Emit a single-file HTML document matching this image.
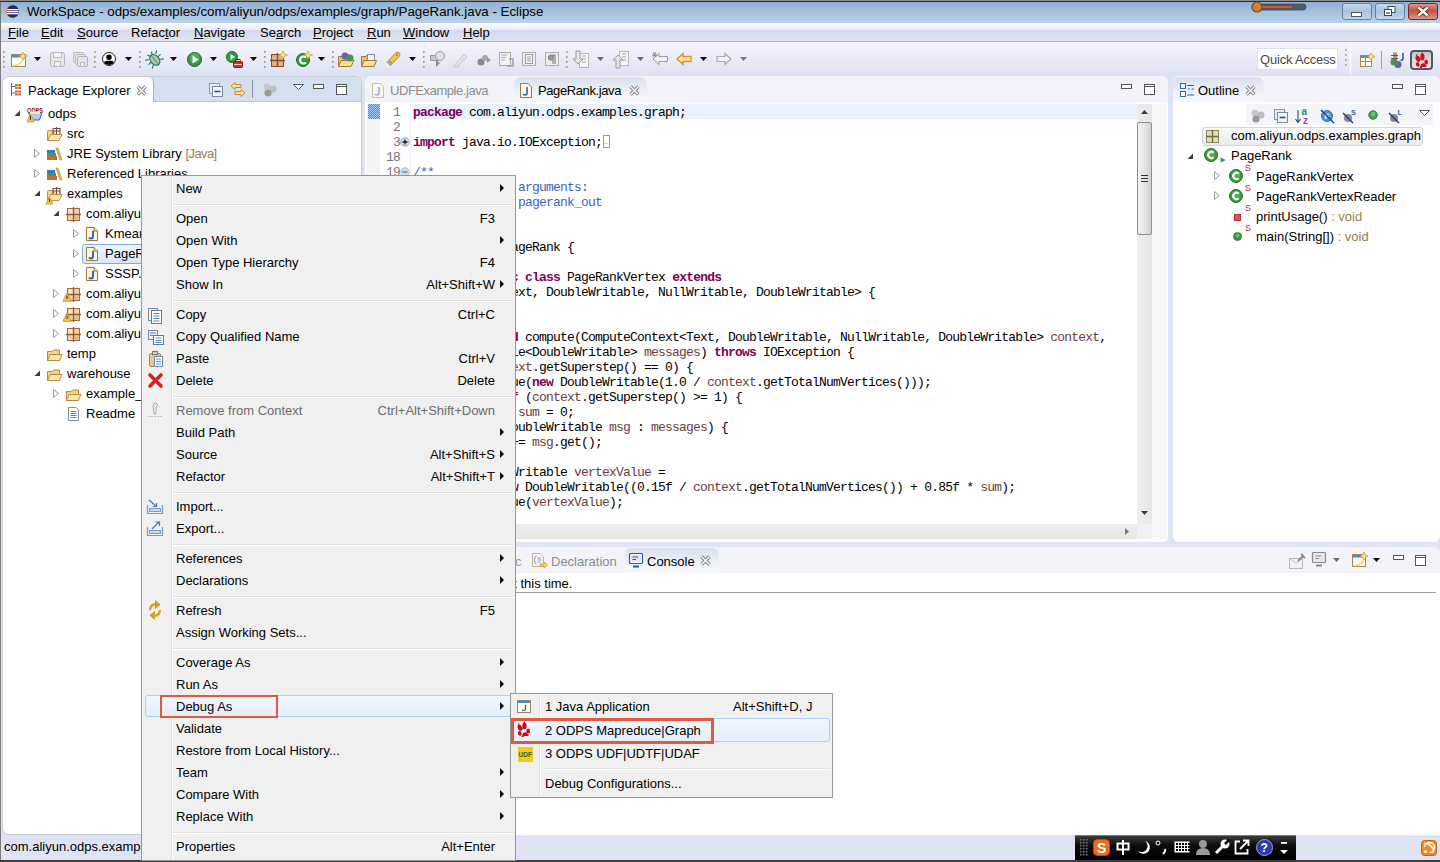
<!DOCTYPE html><html><head><meta charset="utf-8"><style>
*{margin:0;padding:0;box-sizing:border-box}
html,body{width:1440px;height:862px;overflow:hidden;background:#dfe4f4;font-family:"Liberation Sans",sans-serif;font-size:13px;color:#000}
.a{position:absolute}
.t{position:absolute;white-space:nowrap;line-height:16px}
.code{position:absolute;font-family:"Liberation Mono",monospace;font-size:13px;letter-spacing:-0.8px;white-space:pre;line-height:15px;color:#000}
.kw{color:#7f0055;font-weight:bold}
.fld{color:#6a3e3e}
.cm{color:#3f5fbf}
.ln{position:absolute;font-family:"Liberation Mono",monospace;font-size:13px;letter-spacing:-0.8px;white-space:pre;line-height:15px;color:#787878;text-align:right;width:30px}
.menu{position:absolute;background:#f0f0f0;border:1px solid #979797}
.sep{position:absolute;height:2px;border-top:1px solid #e0e0e0;border-bottom:1px solid #fff}
.arr{position:absolute;width:0;height:0;border-top:4px solid transparent;border-bottom:4px solid transparent;border-left:4px solid #000}
u{text-decoration:underline;text-underline-offset:1px}
svg{position:absolute;overflow:visible}
</style></head><body>
<div class="a" style="left:0;top:0;width:1440px;height:1px;background:#8a8a8a"></div><div class="a" style="left:0;top:1px;width:1440px;height:1px;background:#2e2e2e"></div>
<div class="a" style="left:0;top:2px;width:1440px;height:21px;background:linear-gradient(#93b0d2,#b9d3eb)"></div>
<div class="t" style="left:27px;top:4px;font-size:13.3px;color:#000">WorkSpace - odps/examples/com/aliyun/odps/examples/graph/PageRank.java - Eclipse</div>
<svg style="left:4px;top:4px" width="16" height="16" viewBox="0 0 16 16"><circle cx="8" cy="7.5" r="6.5" fill="#f0a030"/><circle cx="8.8" cy="7.5" r="6.2" fill="#2c2660"/><rect x="3" y="5" width="11.5" height="1.3" fill="#fff"/><rect x="2.6" y="7" width="12" height="1.3" fill="#fff"/><rect x="3" y="9" width="11.5" height="1.3" fill="#fff"/></svg>
<svg style="left:1250px;top:1px" width="58" height="12" viewBox="0 0 58 12"><rect x="2" y="3" width="54" height="6" rx="3" fill="#4d5d6e" stroke="#3a4654" stroke-width="0.8"/><rect x="6" y="5" width="36" height="2" fill="#e8501e"/><circle cx="7" cy="6" r="5" fill="#e67a1a" stroke="#4a5560" stroke-width="1.2"/></svg>
<svg style="left:1342px;top:3px" width="30" height="17" viewBox="0 0 30 17"><defs><linearGradient id="g1342" x1="0" y1="0" x2="0" y2="1"><stop offset="0" stop-color="#c7d9ee"/><stop offset="0.5" stop-color="#a9c1dd"/><stop offset="0.5" stop-color="#a9c1dd" stop-opacity="0.85"/><stop offset="1" stop-color="#c7d9ee"/></linearGradient></defs><rect x="0.5" y="0.5" width="29" height="16" rx="2.5" fill="url(#g1342)" stroke="#6a7f9c"/><rect x="9.5" y="9.5" width="10" height="4" fill="#fff" stroke="#3a4a60" stroke-width="0.9"/></svg>
<svg style="left:1375px;top:3px" width="30" height="17" viewBox="0 0 30 17"><defs><linearGradient id="g1375" x1="0" y1="0" x2="0" y2="1"><stop offset="0" stop-color="#c7d9ee"/><stop offset="0.5" stop-color="#a9c1dd"/><stop offset="0.5" stop-color="#a9c1dd" stop-opacity="0.85"/><stop offset="1" stop-color="#c7d9ee"/></linearGradient></defs><rect x="0.5" y="0.5" width="29" height="16" rx="2.5" fill="url(#g1375)" stroke="#6a7f9c"/><rect x="13" y="3.5" width="7" height="6" fill="#fff" stroke="#3a4a60" stroke-width="1"/><rect x="9.5" y="6.5" width="7" height="6" fill="#fff" stroke="#3a4a60" stroke-width="1"/><rect x="11" y="9" width="4" height="2" fill="#7f90a8"/></svg>
<svg style="left:1408px;top:3px" width="30" height="17" viewBox="0 0 30 17"><defs><linearGradient id="g1408" x1="0" y1="0" x2="0" y2="1"><stop offset="0" stop-color="#e49a8a"/><stop offset="0.5" stop-color="#c44a36"/><stop offset="0.5" stop-color="#c44a36" stop-opacity="0.85"/><stop offset="1" stop-color="#e49a8a"/></linearGradient></defs><rect x="0.5" y="0.5" width="29" height="16" rx="2.5" fill="url(#g1408)" stroke="#6e2a22"/><path d="M10.5 4.5 L19.5 12.5 M19.5 4.5 L10.5 12.5" stroke="#3a1a16" stroke-width="4"/><path d="M10.5 4.5 L19.5 12.5 M19.5 4.5 L10.5 12.5" stroke="#fff" stroke-width="2.4"/></svg>
<div class="a" style="left:0;top:23px;width:1440px;height:18px;background:linear-gradient(#ffffff 0px,#f2f3fa 4px,#e6e9f4 7px,#d3d8ec 7px,#dfe4f4 18px)"></div>
<div class="a" style="left:0;top:41px;width:1440px;height:1px;background:#b0b5c6"></div>
<div class="t" style="left:8px;top:25px"><u>F</u>ile</div>
<div class="t" style="left:41px;top:25px"><u>E</u>dit</div>
<div class="t" style="left:77px;top:25px"><u>S</u>ource</div>
<div class="t" style="left:131px;top:25px">Refac<u>t</u>or</div>
<div class="t" style="left:194px;top:25px"><u>N</u>avigate</div>
<div class="t" style="left:260px;top:25px">Se<u>a</u>rch</div>
<div class="t" style="left:313px;top:25px"><u>P</u>roject</div>
<div class="t" style="left:367px;top:25px"><u>R</u>un</div>
<div class="t" style="left:403px;top:25px"><u>W</u>indow</div>
<div class="t" style="left:463px;top:25px"><u>H</u>elp</div>
<div class="a" style="left:0;top:42px;width:1440px;height:34px;background:linear-gradient(#f5f6fd,#dde1f2)"></div>
<svg style="left:3px;top:51px" width="2" height="17" viewBox="0 0 2 17"><rect x="0" y="0" width="1.6" height="1.8" fill="#a8967a"/><rect x="0" y="5" width="1.6" height="1.8" fill="#a8967a"/><rect x="0" y="10" width="1.6" height="1.8" fill="#a8967a"/><rect x="0" y="15" width="1.6" height="1.8" fill="#a8967a"/></svg>
<svg style="left:94px;top:51px" width="2" height="17" viewBox="0 0 2 17"><rect x="0" y="0" width="1.6" height="1.8" fill="#a8967a"/><rect x="0" y="5" width="1.6" height="1.8" fill="#a8967a"/><rect x="0" y="10" width="1.6" height="1.8" fill="#a8967a"/><rect x="0" y="15" width="1.6" height="1.8" fill="#a8967a"/></svg>
<svg style="left:139px;top:51px" width="2" height="17" viewBox="0 0 2 17"><rect x="0" y="0" width="1.6" height="1.8" fill="#a8967a"/><rect x="0" y="5" width="1.6" height="1.8" fill="#a8967a"/><rect x="0" y="10" width="1.6" height="1.8" fill="#a8967a"/><rect x="0" y="15" width="1.6" height="1.8" fill="#a8967a"/></svg>
<svg style="left:264px;top:51px" width="2" height="17" viewBox="0 0 2 17"><rect x="0" y="0" width="1.6" height="1.8" fill="#a8967a"/><rect x="0" y="5" width="1.6" height="1.8" fill="#a8967a"/><rect x="0" y="10" width="1.6" height="1.8" fill="#a8967a"/><rect x="0" y="15" width="1.6" height="1.8" fill="#a8967a"/></svg>
<svg style="left:332px;top:51px" width="2" height="17" viewBox="0 0 2 17"><rect x="0" y="0" width="1.6" height="1.8" fill="#a8967a"/><rect x="0" y="5" width="1.6" height="1.8" fill="#a8967a"/><rect x="0" y="10" width="1.6" height="1.8" fill="#a8967a"/><rect x="0" y="15" width="1.6" height="1.8" fill="#a8967a"/></svg>
<svg style="left:423px;top:51px" width="2" height="17" viewBox="0 0 2 17"><rect x="0" y="0" width="1.6" height="1.8" fill="#a8967a"/><rect x="0" y="5" width="1.6" height="1.8" fill="#a8967a"/><rect x="0" y="10" width="1.6" height="1.8" fill="#a8967a"/><rect x="0" y="15" width="1.6" height="1.8" fill="#a8967a"/></svg>
<svg style="left:566px;top:51px" width="2" height="17" viewBox="0 0 2 17"><rect x="0" y="0" width="1.6" height="1.8" fill="#a8967a"/><rect x="0" y="5" width="1.6" height="1.8" fill="#a8967a"/><rect x="0" y="10" width="1.6" height="1.8" fill="#a8967a"/><rect x="0" y="15" width="1.6" height="1.8" fill="#a8967a"/></svg>
<svg style="left:11px;top:52px" width="17" height="16" viewBox="0 0 17 16"><rect x="0.5" y="2.5" width="14" height="12" fill="#fdfdfd" stroke="#a78a4a"/><rect x="1" y="3" width="13" height="2.5" fill="#3f8fd6"/><path d="M2 14 Q10 13 13 6" stroke="#f1d56a" stroke-width="1.5" fill="none"/><path d="M12 0 L13.6 3 L16.5 4 L13.6 5 L12 8 L10.4 5 L7.5 4 L10.4 3 Z" fill="#fbe38a" stroke="#c09a2a" stroke-width="0.7"/></svg>
<svg style="left:34px;top:57px" width="8" height="5" viewBox="0 0 8 5"><path d="M0 0 H7 L3.5 4 Z" fill="#000"/></svg>
<svg style="left:50px;top:52px" width="16" height="15" viewBox="0 0 16 15"><rect x="0.5" y="0.5" width="14" height="14" rx="2" fill="#e6e6e6" stroke="#b4b4b4"/><rect x="3.5" y="0.5" width="8" height="5" fill="#f4f4f4" stroke="#bcbcbc"/><rect x="4.5" y="9.5" width="6" height="5" fill="#f0f0f0" stroke="#bcbcbc"/></svg>
<svg style="left:73px;top:52px" width="16" height="15" viewBox="0 0 16 15"><rect x="0.5" y="0.5" width="10" height="10" rx="1.5" fill="#e6e6e6" stroke="#bcbcbc"/><rect x="2.5" y="2.5" width="10" height="10" rx="1.5" fill="#e6e6e6" stroke="#bcbcbc"/><rect x="4.5" y="4.5" width="10" height="10" rx="1.5" fill="#e6e6e6" stroke="#b4b4b4"/><rect x="7.5" y="10.5" width="4" height="4" fill="#f0f0f0" stroke="#bcbcbc"/></svg>
<svg style="left:102px;top:52px" width="15" height="15" viewBox="0 0 15 15"><defs><clipPath id="uc"><circle cx="7" cy="7" r="6"/></clipPath></defs><circle cx="7" cy="7" r="6.5" fill="#fff" stroke="#222" stroke-width="1"/><g clip-path="url(#uc)"><circle cx="7" cy="5.3" r="2.7" fill="#000"/><path d="M1 14 Q1.5 8.8 5 8.8 H9 Q12.5 8.8 13 14 Z" fill="#000"/></g></svg>
<svg style="left:125px;top:57px" width="8" height="5" viewBox="0 0 8 5"><path d="M0 0 H7 L3.5 4 Z" fill="#000"/></svg>
<svg style="left:146px;top:51px" width="17" height="17" viewBox="0 0 17 17"><g transform="rotate(-40 8.5 8.5)" stroke="#2a6a6a" stroke-width="1.1" fill="none"><path d="M4 5 L1 3 M4 8.5 H0.5 M4 12 L1 14 M13 5 L16 3 M13 8.5 H16.5 M13 12 L16 14 M7 3 L6 0.5 M10 3 L11 0.5"/><ellipse cx="8.5" cy="9" rx="4.3" ry="6" fill="#a9cc9a"/><path d="M8.5 4 V15" stroke-width="0.7"/></g></svg>
<svg style="left:170px;top:57px" width="8" height="5" viewBox="0 0 8 5"><path d="M0 0 H7 L3.5 4 Z" fill="#000"/></svg>
<svg style="left:187px;top:52px" width="16" height="16" viewBox="0 0 16 16"><circle cx="7.5" cy="7.5" r="7" fill="#2e9a3e" stroke="#1d6e2a"/><circle cx="7.5" cy="6" r="5" fill="#5fc06a" opacity="0.6"/><path d="M5.5 3.5 L11.5 7.5 L5.5 11.5 Z" fill="#fff"/></svg>
<svg style="left:210px;top:57px" width="8" height="5" viewBox="0 0 8 5"><path d="M0 0 H7 L3.5 4 Z" fill="#000"/></svg>
<svg style="left:226px;top:51px" width="17" height="17" viewBox="0 0 17 17"><circle cx="6" cy="6" r="5.5" fill="#2e9a3e" stroke="#1d6e2a"/><path d="M4.5 3 L9 6 L4.5 9 Z" fill="#fff"/><rect x="7.5" y="10.5" width="9" height="6" rx="1" fill="#e02a2a" stroke="#a01010"/><rect x="10" y="8.5" width="4" height="2" fill="none" stroke="#a01010"/><path d="M8 13.5 H16" stroke="#fff" stroke-width="0.8"/></svg>
<svg style="left:250px;top:57px" width="8" height="5" viewBox="0 0 8 5"><path d="M0 0 H7 L3.5 4 Z" fill="#000"/></svg>
<svg style="left:271px;top:51px" width="17" height="16" viewBox="0 0 17 16"><rect x="0.5" y="3.5" width="12" height="12" fill="#d8b48a" stroke="#8e4a2e"/><path d="M6.5 2 V16 M-1 9.5 H14" stroke="#8e4a2e" stroke-width="1.4"/><path d="M12 0 L13.6 3 L16.5 4 L13.6 5 L12 8 L10.4 5 L7.5 4 L10.4 3 Z" fill="#fbe38a" stroke="#c09a2a" stroke-width="0.7"/></svg>
<svg style="left:296px;top:51px" width="17" height="17" viewBox="0 0 17 17"><circle cx="7" cy="9" r="6.5" fill="#2e9a3e" stroke="#1d6e2a"/><path d="M10 6.5 A3.5 3.5 0 1 0 10 11.5" stroke="#fff" stroke-width="2.2" fill="none"/><path d="M12 0 L13.6 3 L16.5 4 L13.6 5 L12 8 L10.4 5 L7.5 4 L10.4 3 Z" fill="#fbe38a" stroke="#c09a2a" stroke-width="0.7"/></svg>
<svg style="left:318px;top:57px" width="8" height="5" viewBox="0 0 8 5"><path d="M0 0 H7 L3.5 4 Z" fill="#000"/></svg>
<svg style="left:338px;top:52px" width="17" height="15" viewBox="0 0 17 15"><path d="M0.5 4.5 H5 L6 3 H12 V14.5 H0.5 Z" fill="#e6c070" stroke="#a8782a"/><path d="M0.5 14.5 L3 8.5 H16 L13 14.5 Z" fill="#f8df9a" stroke="#a8782a"/><circle cx="7" cy="4" r="3.5" fill="#6a5ab0"/><circle cx="12" cy="6" r="3.5" fill="#3e9a4a"/></svg>
<svg style="left:361px;top:52px" width="16" height="15" viewBox="0 0 16 15"><path d="M0.5 4.5 H5 L6 3 H12 V14.5 H0.5 Z" fill="#e6c070" stroke="#a8782a"/><rect x="6.5" y="2.5" width="7" height="6" fill="#f4f6fb" stroke="#7f8fa8"/><path d="M0.5 14.5 L3 8.5 H15.5 L13 14.5 Z" fill="#f8df9a" stroke="#a8782a"/></svg>
<svg style="left:385px;top:51px" width="16" height="17" viewBox="0 0 16 17"><path d="M4 9 L11 1.5 Q13 0.5 14.5 2 Q15.5 3.5 14.5 5 L7.5 12.5 Z" fill="#f0c050" stroke="#b8862a" stroke-width="0.9"/><path d="M3.5 9.5 L7 13 L5 15 L1.5 11.5 Z" fill="#a8a8a8" stroke="#888" stroke-width="0.6"/><path d="M1.5 11.5 L5 15 L2 16.5 L0 14 Z" fill="#fff8c8"/><circle cx="12" cy="4" r="0.8" fill="#3a6ab0"/></svg>
<svg style="left:409px;top:57px" width="8" height="5" viewBox="0 0 8 5"><path d="M0 0 H7 L3.5 4 Z" fill="#000"/></svg>
<svg style="left:430px;top:51px" width="16" height="17" viewBox="0 0 16 17"><rect x="0.5" y="4.5" width="7" height="5" fill="#c8c8c8" stroke="#9a9a9a"/><circle cx="10" cy="5" r="4.5" fill="#e0e0e0" stroke="#9a9a9a"/><path d="M6 9 V16 L10 12 Z" fill="#8a8a8a"/></svg>
<svg style="left:452px;top:52px" width="16" height="16" viewBox="0 0 16 16"><path d="M2 14 L12 2 L15 5 L5 15 Z" fill="#e2e2e2" stroke="#c8c8c8"/><path d="M0 15 H8" stroke="#d0d0d0"/></svg>
<svg style="left:477px;top:53px" width="15" height="13" viewBox="0 0 15 13"><circle cx="4" cy="9" r="3.5" fill="#8a8a8a"/><circle cx="8" cy="5" r="3" fill="#a8a8a8"/><path d="M10 4 L14 7 L10 10" fill="#9a9a9a"/></svg>
<svg style="left:499px;top:52px" width="16" height="15" viewBox="0 0 16 15"><rect x="0.5" y="0.5" width="11" height="13" fill="#f2f2f2" stroke="#aaaaaa"/><path d="M2 3 H8 M2 5.5 H7 M2 8 H6" stroke="#b0b0b0"/><path d="M8 14 L14 14 V7 H10" fill="none" stroke="#a0a0a0" stroke-width="1.5"/></svg>
<svg style="left:522px;top:52px" width="15" height="15" viewBox="0 0 15 15"><rect x="0.5" y="0.5" width="13" height="13" fill="#ececec" stroke="#b0b0b0"/><rect x="3.5" y="2.5" width="7" height="9" fill="#f6f6f6" stroke="#a0a0a0"/><path d="M5 5 H9 M5 7 H9 M5 9 H9" stroke="#a0a0a0"/></svg>
<svg style="left:545px;top:52px" width="15" height="15" viewBox="0 0 15 15"><rect x="0.5" y="0.5" width="13" height="13" fill="#ececec" stroke="#b0b0b0"/><path d="M8 3 V12 M10 3 V12 M10 3 H6 A2.5 2.5 0 0 0 6 8 H8" stroke="#8a8a8a" stroke-width="1.2" fill="#9a9a9a"/></svg>
<svg style="left:573px;top:51px" width="16" height="17" viewBox="0 0 16 17"><rect x="6.5" y="2.5" width="9" height="14" fill="#f6f6f6" stroke="#b8b8b8"/><path d="M9 5 H13 M9 8 H13 M9 11 H13" stroke="#a8a8a8"/><path d="M3 0 V8 H0 L5 13 L10 8 H7 V0 Z" fill="#e8e8e8" stroke="#9a9a9a"/></svg>
<svg style="left:597px;top:57px" width="8" height="5" viewBox="0 0 8 5"><path d="M0 0 H7 L3.5 4 Z" fill="#6a6a6a"/></svg>
<svg style="left:613px;top:51px" width="16" height="17" viewBox="0 0 16 17"><rect x="6.5" y="0.5" width="9" height="14" fill="#f6f6f6" stroke="#b8b8b8"/><path d="M9 3 H13 M9 6 H13 M9 9 H13" stroke="#a8a8a8"/><path d="M3 17 V9 H0 L5 4 L10 9 H7 V17 Z" fill="#e8e8e8" stroke="#9a9a9a"/></svg>
<svg style="left:637px;top:57px" width="8" height="5" viewBox="0 0 8 5"><path d="M0 0 H7 L3.5 4 Z" fill="#6a6a6a"/></svg>
<svg style="left:652px;top:52px" width="17" height="14" viewBox="0 0 17 14"><path d="M1 7 L7 1.5 V4.5 H15.5 V9.5 H7 V12.5 Z" fill="#f2f2f2" stroke="#9a9a9a"/><path d="M1 0 L4 5 M0 3 H5 M4 0 L1 5" stroke="#6a6a6a" stroke-width="0.8"/></svg>
<svg style="left:676px;top:52px" width="16" height="14" viewBox="0 0 16 14"><path d="M1 7 L7 1.5 V4.5 H15 V9.5 H7 V12.5 Z" fill="#fbe4a0" stroke="#d09a20" stroke-width="1.4"/></svg>
<svg style="left:700px;top:57px" width="8" height="5" viewBox="0 0 8 5"><path d="M0 0 H7 L3.5 4 Z" fill="#000"/></svg>
<svg style="left:716px;top:52px" width="16" height="14" viewBox="0 0 16 14"><path d="M15 7 L9 1.5 V4.5 H1 V9.5 H9 V12.5 Z" fill="#f4f4f4" stroke="#a8a8a8" stroke-width="1.2"/></svg>
<svg style="left:740px;top:57px" width="8" height="5" viewBox="0 0 8 5"><path d="M0 0 H7 L3.5 4 Z" fill="#7a7a7a"/></svg>
<div class="a" style="left:1257px;top:48px;width:81px;height:22px;background:#fff;border:1px solid #dfe2ea"></div>
<div class="t" style="left:1260px;top:52px;color:#4a4a4a;letter-spacing:-0.2px">Quick Access</div>
<svg style="left:1345px;top:49px" width="2" height="20" viewBox="0 0 2 20"><rect x="0" y="0" width="1.6" height="1.8" fill="#a8967a"/><rect x="0" y="5" width="1.6" height="1.8" fill="#a8967a"/><rect x="0" y="10" width="1.6" height="1.8" fill="#a8967a"/><rect x="0" y="15" width="1.6" height="1.8" fill="#a8967a"/></svg>
<div class="a" style="left:1350px;top:43px;width:1px;height:32px;background:#c5c9d6;border-right:1px solid #fff"></div>
<svg style="left:1360px;top:53px" width="15" height="14" viewBox="0 0 15 14"><rect x="0.5" y="2.5" width="11" height="11" fill="#fdfaf0" stroke="#a8884a"/><rect x="1" y="3" width="10" height="2" fill="#4a90d8"/><path d="M0.5 8.5 H11.5 M5.5 5 V13.5" stroke="#a8884a"/><path d="M11 0 L12.5 2.5 L15 3.5 L12.5 4.5 L11 7 L9.5 4.5 L7 3.5 L9.5 2.5 Z" fill="#fbe38a" stroke="#c09a2a" stroke-width="0.7"/></svg>
<div class="a" style="left:1381px;top:51px;width:1px;height:18px;background:#9aa0b0"></div>
<svg style="left:1390px;top:52px" width="16" height="17" viewBox="0 0 16 17"><path d="M4 0.5 V9 M1 3.5 H8 M1 6.5 H8 M6 0.5 V9" stroke="#8e4a2e" stroke-width="1.2"/><path d="M13 1 V6 Q13 8.5 10.5 8.5" stroke="#2a62b4" stroke-width="1.6" fill="none"/><circle cx="8" cy="12.5" r="3.5" fill="#6a5ab0"/><circle cx="4" cy="10" r="3.5" fill="#3e9a4a"/></svg>
<div class="a" style="left:1410px;top:50px;width:23px;height:20px;background:linear-gradient(#c4c6ce,#dcdee6 60%,#e4e6ee);border:2px solid #55585e;border-radius:4px"></div>
<svg style="left:1414px;top:53px" width="15" height="15" viewBox="0 0 15 15"><g transform="scale(0.9375)" fill="#c8141e"><ellipse cx="4.3" cy="6.2" rx="2.4" ry="3.4" transform="rotate(-30 4.3 6.2)"/><ellipse cx="9" cy="4.2" rx="2.3" ry="3.6"/><ellipse cx="13" cy="9.6" rx="2" ry="2.7"/><ellipse cx="4" cy="12.2" rx="2" ry="2.6" transform="rotate(-20 4 12.2)"/><path d="M5.8 16 L7.6 11.6 L10.4 10.6 L13.8 13.6 L12.8 15 L8.8 15 L8 16 Z"/><circle cx="2.8" cy="2.2" r="0.9"/><circle cx="8.8" cy="0.3" r="0.9"/></g></svg>
<div class="a" style="left:0;top:2px;width:1px;height:858px;background:#7a7a7a"></div>
<div class="a" style="left:2px;top:76px;width:360px;height:759px;background:#fff;border:1px solid #c6cbd6;border-radius:7px"></div>
<div class="a" style="left:3px;top:77px;width:358px;height:25px;background:#d4e0f0;border-radius:6px 6px 0 0;border-bottom:1px solid #b8c4d8"></div>
<div class="a" style="left:3px;top:77px;width:151px;height:25px;background:#fff;border-radius:6px 6px 0 0;border-right:1px solid #aab4c8"></div>
<div class="t" style="left:28px;top:83px">Package Explorer</div>
<svg style="left:10px;top:83px" width="12" height="14" viewBox="0 0 12 14"><path d="M1.5 0 V13 M1.5 3.5 H5 M1.5 10 H5" stroke="#5a6a7a" stroke-width="1"/><rect x="5" y="1" width="6" height="5" fill="#c0703a"/><path d="M8 1 V6 M5 3.5 H11" stroke="#f4e0c0" stroke-width="0.8"/><rect x="5" y="7.5" width="6" height="5" fill="#c0703a"/><path d="M8 7.5 V12.5 M5 10 H11" stroke="#f4e0c0" stroke-width="0.8"/></svg>
<svg style="left:136px;top:85px" width="11" height="11" viewBox="0 0 11 11"><path d="M1.5 1.5 L9.5 9.5 M9.5 1.5 L1.5 9.5" stroke="#7a7a7a" stroke-width="3.2"/><path d="M1.5 1.5 L9.5 9.5 M9.5 1.5 L1.5 9.5" stroke="#fff" stroke-width="1.5"/></svg>
<svg style="left:209px;top:83px" width="14" height="14" viewBox="0 0 14 14"><rect x="0.5" y="0.5" width="10" height="10" fill="#e4ecf4" stroke="#8a9aaa"/><rect x="3.5" y="3.5" width="10" height="10" fill="#eef6f8" stroke="#7a8a9a"/><path d="M5.5 8.5 H11.5" stroke="#1a5a9a" stroke-width="1.6"/></svg>
<svg style="left:230px;top:82px" width="16" height="16" viewBox="0 0 16 16"><path d="M1 4 L5 0.5 V2.5 H11 V5.5 H5 V7.5 Z" fill="#fbe4a0" stroke="#c89020" stroke-width="1"/><path d="M15 11 L11 7.5 V9.5 H5 V12.5 H11 V14.5 Z" fill="#fbe4a0" stroke="#c89020" stroke-width="1"/></svg>
<div class="a" style="left:252px;top:80px;width:1px;height:18px;background:#8a94a6"></div>
<svg style="left:263px;top:83px" width="14" height="14" viewBox="0 0 14 14"><circle cx="4" cy="4" r="3.5" fill="#c8c8c8"/><circle cx="10" cy="6" r="3.5" fill="#bdbdbd"/><circle cx="5" cy="10" r="3.6" fill="#9a9a9a"/></svg>
<svg style="left:293px;top:84px" width="11" height="7" viewBox="0 0 11 7"><path d="M0.5 0.5 H10.5 L5.5 5.5 Z" fill="#fff" stroke="#555"/></svg>
<svg style="left:313px;top:84px" width="11" height="6" viewBox="0 0 11 6"><rect x="0.5" y="0.5" width="10" height="4" fill="#fff" stroke="#555"/></svg>
<svg style="left:336px;top:84px" width="11" height="11" viewBox="0 0 11 11"><rect x="0.5" y="0.5" width="10" height="10" fill="#fff" stroke="#555"/><path d="M0.5 2.5 H10.5" stroke="#555"/></svg>
<div class="a" style="left:365px;top:76px;width:803px;height:466px;background:#fff;border-radius:7px 7px 6px 0"></div>
<div class="a" style="left:365px;top:76px;width:803px;height:26px;background:#f3f4fa;border-radius:7px 7px 0 0"></div>
<div class="a" style="left:514px;top:77px;width:133px;height:25px;background:linear-gradient(#d8e0ec,#eef2f9 60%,#f6f8fc);border-radius:7px 7px 0 0"></div>
<div class="t" style="left:390px;top:83px;color:#8c8c8c;letter-spacing:-0.45px">UDFExample.java</div>
<div class="t" style="left:538px;top:83px;letter-spacing:-0.4px">PageRank.java</div>
<div class="a" style="left:413px;top:104px;width:724px;height:15px;background:#e8f2fe"></div>
<svg style="left:372px;top:83px" width="12" height="15" viewBox="0 0 12 15"><path d="M0.5 0.5 H8 L11.5 4 V14.5 H0.5 Z" fill="#fbf8ee" stroke="#cdbf9a"/><path d="M7 4 V10 Q7 12 5 12 Q3.5 12 3 11" fill="none" stroke="#9ab0cf" stroke-width="1.6"/></svg>
<svg style="left:520px;top:83px" width="12" height="15" viewBox="0 0 12 15"><path d="M0.5 0.5 H8 L11.5 4 V14.5 H0.5 Z" fill="#fbf8ee" stroke="#9a7a3a"/><path d="M7 4 V10 Q7 12 5 12 Q3.5 12 3 11" fill="none" stroke="#2e5a9e" stroke-width="1.6"/></svg>
<svg style="left:629px;top:85px" width="11" height="11" viewBox="0 0 11 11"><path d="M1.5 1.5 L9.5 9.5 M9.5 1.5 L1.5 9.5" stroke="#7a7a7a" stroke-width="3.2"/><path d="M1.5 1.5 L9.5 9.5 M9.5 1.5 L1.5 9.5" stroke="#fff" stroke-width="1.5"/></svg>
<svg style="left:1121px;top:84px" width="11" height="6" viewBox="0 0 11 6"><rect x="0.5" y="0.5" width="10" height="4" fill="#fff" stroke="#555"/></svg>
<svg style="left:1144px;top:84px" width="11" height="11" viewBox="0 0 11 11"><rect x="0.5" y="0.5" width="10" height="10" fill="#fff" stroke="#555"/><path d="M0.5 2.5 H10.5" stroke="#555"/></svg>
<div class="a" style="left:367px;top:104px;width:13px;height:420px;background:#f5f5f5"></div>
<div class="a" style="left:368px;top:104px;width:12px;height:15px;background:repeating-conic-gradient(#3b8ef0 0 25%,#a9cdf8 0 50%) 0 0/2px 2px"></div>
<div class="a" style="left:410px;top:104px;width:1px;height:420px;background:#f0f0f0"></div>
<div class="ln" style="left:370px;top:105px">1</div>
<div class="ln" style="left:370px;top:120px">2</div>
<div class="ln" style="left:370px;top:135px">3</div>
<div class="ln" style="left:370px;top:150px">18</div>
<div class="ln" style="left:370px;top:165px">19</div>
<svg style="left:400px;top:137px" width="10" height="10" viewBox="0 0 10 10"><circle cx="5" cy="5" r="4.3" fill="#d0dcea" stroke="#8aa0b8" stroke-width="0.8"/><path d="M2.5 5 H7.5 M5 2.5 V7.5" stroke="#1a1a1a" stroke-width="1.3"/></svg>
<svg style="left:400px;top:167px" width="10" height="10" viewBox="0 0 10 10"><circle cx="5" cy="5" r="4.3" fill="#d0dcea" stroke="#a8b8c8" stroke-width="0.8"/><path d="M2.5 5 H7.5" stroke="#5a6a7a" stroke-width="1.2"/></svg>
<div class="a" style="left:603px;top:135px;width:7px;height:13px;border:1px solid #9a9a9a"></div>
<div class="t" style="left:604px;top:137px;font-size:7px;line-height:9px;color:#5a5a5a">..</div>
<div class="a" style="left:1137px;top:104px;width:15px;height:420px;background:linear-gradient(90deg,#ededed,#e6e6e6)"></div>
<svg style="left:1141px;top:110px" width="8" height="5" viewBox="0 0 8 5"><path d="M0 4 L3.5 0 L7 4 Z" fill="#3a3a3a"/></svg>
<svg style="left:1141px;top:511px" width="8" height="5" viewBox="0 0 8 5"><path d="M0 0 L3.5 4 L7 0 Z" fill="#3a3a3a"/></svg>
<div class="a" style="left:1137px;top:122px;width:15px;height:113px;border:1px solid #8f8f8f;border-radius:2px;background:linear-gradient(90deg,#f2f2f2,#e8e8e8 45%,#d0d0d6)"></div>
<svg style="left:1140px;top:174px" width="9" height="9" viewBox="0 0 9 9"><path d="M1 1.5 H8 M1 4.5 H8 M1 7.5 H8" stroke="#303030" stroke-width="1.2"/></svg>
<div class="a" style="left:1152px;top:104px;width:15px;height:435px;background:#f7f7f7"></div>
<div class="a" style="left:366px;top:524px;width:786px;height:15px;background:linear-gradient(#ededed,#e6e6e6)"></div>
<svg style="left:1125px;top:528px" width="5" height="8" viewBox="0 0 5 8"><path d="M0 0 L4 3.5 L0 7 Z" fill="#7a7a7a"/></svg>
<div class="a" style="left:1137px;top:524px;width:15px;height:15px;background:#f0f0f0"></div>
<div class="code" style="left:413px;top:105px"><span class="kw">package</span> com.aliyun.odps.examples.graph;</div>
<div class="code" style="left:413px;top:120px"></div>
<div class="code" style="left:413px;top:135px"><span class="kw">import</span> java.io.IOException;</div>
<div class="code" style="left:413px;top:150px"></div>
<div class="code" style="left:413px;top:165px"><span class="cm">/**</span></div>
<div class="code" style="left:413px;top:180px"><span class="cm"> * Set program arguments:</span></div>
<div class="code" style="left:413px;top:195px"><span class="cm"> * pagerank_in pagerank_out</span></div>
<div class="code" style="left:413px;top:210px"><span class="cm"> */</span></div>
<div class="code" style="left:413px;top:225px"></div>
<div class="code" style="left:413px;top:240px"><span class="kw">public</span> <span class="kw">class</span> PageRank {</div>
<div class="code" style="left:413px;top:255px"></div>
<div class="code" style="left:413px;top:270px">  <span class="kw">public</span> <span class="kw">static</span> <span class="kw">class</span> PageRankVertex <span class="kw">extends</span></div>
<div class="code" style="left:413px;top:285px">      Vertex&lt;Text, DoubleWritable, NullWritable, DoubleWritable&gt; {</div>
<div class="code" style="left:413px;top:300px"></div>
<div class="code" style="left:413px;top:315px">    @Override</div>
<div class="code" style="left:413px;top:330px">    <span class="kw">public</span> <span class="kw">void</span> compute(ComputeContext&lt;Text, DoubleWritable, NullWritable, DoubleWritable&gt; <span class="fld">context</span>,</div>
<div class="code" style="left:413px;top:345px">        Iterable&lt;DoubleWritable&gt; <span class="fld">messages</span>) <span class="kw">throws</span> IOException {</div>
<div class="code" style="left:413px;top:360px">      <span class="kw">if</span> (<span class="fld">context</span>.getSuperstep() == 0) {</div>
<div class="code" style="left:413px;top:375px">        setValue(<span class="kw">new</span> DoubleWritable(1.0 / <span class="fld">context</span>.getTotalNumVertices()));</div>
<div class="code" style="left:413px;top:390px">      } <span class="kw">else</span> <span class="kw">if</span> (<span class="fld">context</span>.getSuperstep() &gt;= 1) {</div>
<div class="code" style="left:413px;top:405px">        <span class="kw">double</span> <span class="fld">sum</span> = 0;</div>
<div class="code" style="left:413px;top:420px">        <span class="kw">for</span> (DoubleWritable <span class="fld">msg</span> : <span class="fld">messages</span>) {</div>
<div class="code" style="left:413px;top:435px">          <span class="fld">sum</span> += <span class="fld">msg</span>.get();</div>
<div class="code" style="left:413px;top:450px">        }</div>
<div class="code" style="left:413px;top:465px">        DoubleWritable <span class="fld">vertexValue</span> =</div>
<div class="code" style="left:413px;top:480px">            <span class="kw">new</span> DoubleWritable((0.15f / <span class="fld">context</span>.getTotalNumVertices()) + 0.85f * <span class="fld">sum</span>);</div>
<div class="code" style="left:413px;top:495px">        setValue(<span class="fld">vertexValue</span>);</div>
<div class="code" style="left:413px;top:510px">      }</div>
<div class="a" style="left:1173px;top:76px;width:267px;height:466px;background:#fff;border-radius:7px 7px 6px 6px"></div>
<div class="a" style="left:1173px;top:76px;width:267px;height:26px;background:#f3f4fa;border-radius:7px 7px 0 0"></div>
<div class="a" style="left:1173px;top:77px;width:91px;height:25px;background:linear-gradient(#d8e0ec,#eef2f9 60%,#f6f8fc);border-radius:7px 7px 0 0"></div>
<div class="t" style="left:1198px;top:83px">Outline</div>
<svg style="left:1180px;top:83px" width="15" height="15" viewBox="0 0 15 15"><rect x="0.5" y="0.5" width="5" height="5" fill="#fff" stroke="#2a6ab4"/><rect x="0.5" y="8.5" width="5" height="5" fill="#fff" stroke="#2a6ab4"/><path d="M7 2.5 H14 M8 6 H10 M11.5 6 H14 M7 12 H14" stroke="#2a6ab4"/></svg>
<svg style="left:1245px;top:85px" width="11" height="11" viewBox="0 0 11 11"><path d="M1.5 1.5 L9.5 9.5 M9.5 1.5 L1.5 9.5" stroke="#7a7a7a" stroke-width="3.2"/><path d="M1.5 1.5 L9.5 9.5 M9.5 1.5 L1.5 9.5" stroke="#fff" stroke-width="1.5"/></svg>
<svg style="left:1392px;top:84px" width="11" height="6" viewBox="0 0 11 6"><rect x="0.5" y="0.5" width="10" height="4" fill="#fff" stroke="#555"/></svg>
<svg style="left:1415px;top:84px" width="11" height="11" viewBox="0 0 11 11"><rect x="0.5" y="0.5" width="10" height="10" fill="#fff" stroke="#555"/><path d="M0.5 2.5 H10.5" stroke="#555"/></svg>
<div class="a" style="left:1246px;top:104px;width:187px;height:21px;background:#f4f5fa"></div>
<svg style="left:1251px;top:109px" width="14" height="14" viewBox="0 0 14 14"><circle cx="4" cy="4" r="3.5" fill="#c8c8c8"/><circle cx="10" cy="6" r="3.5" fill="#bdbdbd"/><circle cx="5" cy="10" r="3.6" fill="#9a9a9a"/></svg>
<svg style="left:1274px;top:109px" width="14" height="14" viewBox="0 0 14 14"><rect x="0.5" y="0.5" width="10" height="10" fill="#e4ecf4" stroke="#8a9aaa"/><rect x="3.5" y="3.5" width="10" height="10" fill="#eef6f8" stroke="#7a8a9a"/><path d="M5.5 8.5 H11.5" stroke="#1a5a9a" stroke-width="1.6"/></svg>
<svg style="left:1295px;top:107px" width="17" height="17" viewBox="0 0 17 17"><path d="M3 3 V15 M0.5 12 L3 15.5 L5.5 12" stroke="#2a4a6a" stroke-width="1.1" fill="none"/><text x="6.5" y="8" font-family="Liberation Sans" font-weight="bold" font-size="10" fill="#2a8a6a">a</text><text x="8" y="17" font-family="Liberation Sans" font-weight="bold" font-size="10" fill="#a040a0">z</text></svg>
<svg style="left:1320px;top:109px" width="15" height="15" viewBox="0 0 15 15"><circle cx="7" cy="7" r="5.5" fill="#4a9ae0" stroke="#2a6ab4"/><text x="4.5" y="10" font-family="Liberation Sans" font-weight="bold" font-size="8" fill="#fff">F</text><path d="M1 1 L14 14" stroke="#1a3a8a" stroke-width="1.4"/></svg>
<svg style="left:1343px;top:108px" width="14" height="16" viewBox="0 0 14 16"><circle cx="5" cy="10" r="4" fill="#8a8a8a"/><path d="M0 5 L10 15" stroke="#1a3a8a" stroke-width="1.4"/><text x="8" y="7" font-family="Liberation Sans" font-weight="bold" font-size="7.5" fill="#2a6ab4">S</text></svg>
<svg style="left:1368px;top:110px" width="10" height="10" viewBox="0 0 10 10"><circle cx="5" cy="5" r="4.3" fill="#4aa04a" stroke="#2a7a2a" stroke-width="0.8"/><circle cx="5" cy="4" r="2.2" fill="#8ad08a" opacity="0.6"/></svg>
<svg style="left:1389px;top:108px" width="14" height="16" viewBox="0 0 14 16"><circle cx="5" cy="10" r="4" fill="#8a8a8a"/><path d="M0 5 L10 15" stroke="#1a3a8a" stroke-width="1.4"/><text x="8.5" y="7" font-family="Liberation Sans" font-weight="bold" font-size="7.5" fill="#2a6ab4">L</text></svg>
<svg style="left:1419px;top:110px" width="11" height="7" viewBox="0 0 11 7"><path d="M0.5 0.5 H10.5 L5.5 5.5 Z" fill="#fff" stroke="#555"/></svg>
<div class="a" style="left:1202px;top:127px;width:221px;height:19px;border:1px solid #d4d4d4;border-radius:3px;background:linear-gradient(#fafafa,#ececec)"></div>
<svg style="left:1206px;top:130px" width="13" height="13" viewBox="0 0 13 13"><rect x="0.5" y="0.5" width="12" height="12" fill="#e2deb0" stroke="#8a8a5a"/><path d="M6.5 0 V13 M0 6.5 H13" stroke="#6a6a4a" stroke-width="1.3"/></svg>
<div class="t" style="left:1231px;top:128px">com.aliyun.odps.examples.graph</div>
<svg style="left:1187px;top:153px" width="7" height="7" viewBox="0 0 7 7"><path d="M6 0.5 L6 6 L0.5 6 Z" fill="#3c3c3c"/></svg>
<svg style="left:1204px;top:148px" width="14.0" height="14.0" viewBox="0 0 14.0 14.0"><circle cx="7.0" cy="7.0" r="6.5" fill="#3a9a3a" stroke="#2a6e2a"/><circle cx="7.0" cy="6.0" r="4.0" fill="#6ec06a" opacity="0.5"/><path d="M9.7 4.7 A3.2 3.2 0 1 0 9.7 9.3" stroke="#fff" stroke-width="2" fill="none"/></svg>
<svg style="left:1220px;top:157px" width="7" height="6" viewBox="0 0 7 6"><path d="M0.5 0.5 L6 3 L0.5 5.5 Z" fill="#2a9a6a"/></svg>
<div class="t" style="left:1231px;top:148px">PageRank</div>
<svg style="left:1214px;top:171px" width="7" height="10" viewBox="0 0 7 10"><path d="M0.5 0.5 L5.5 4.5 L0.5 8.5 Z" fill="#fff" stroke="#9a9a9a" stroke-width="1"/></svg>
<svg style="left:1229px;top:169px" width="14.0" height="14.0" viewBox="0 0 14.0 14.0"><circle cx="7.0" cy="7.0" r="6.5" fill="#3a9a3a" stroke="#2a6e2a"/><circle cx="7.0" cy="6.0" r="4.0" fill="#6ec06a" opacity="0.5"/><path d="M9.7 4.7 A3.2 3.2 0 1 0 9.7 9.3" stroke="#fff" stroke-width="2" fill="none"/></svg>
<div class="t" style="left:1245px;top:163px;font-size:9px;line-height:10px;color:#c02040">S</div>
<div class="t" style="left:1256px;top:169px">PageRankVertex</div>
<svg style="left:1214px;top:191px" width="7" height="10" viewBox="0 0 7 10"><path d="M0.5 0.5 L5.5 4.5 L0.5 8.5 Z" fill="#fff" stroke="#9a9a9a" stroke-width="1"/></svg>
<svg style="left:1229px;top:189px" width="14.0" height="14.0" viewBox="0 0 14.0 14.0"><circle cx="7.0" cy="7.0" r="6.5" fill="#3a9a3a" stroke="#2a6e2a"/><circle cx="7.0" cy="6.0" r="4.0" fill="#6ec06a" opacity="0.5"/><path d="M9.7 4.7 A3.2 3.2 0 1 0 9.7 9.3" stroke="#fff" stroke-width="2" fill="none"/></svg>
<div class="t" style="left:1245px;top:183px;font-size:9px;line-height:10px;color:#c02040">S</div>
<div class="t" style="left:1256px;top:189px">PageRankVertexReader</div>
<svg style="left:1234px;top:214px" width="7" height="7" viewBox="0 0 7 7"><rect x="0.5" y="0.5" width="6" height="6" fill="#e84a5a" stroke="#c02a3a"/></svg>
<div class="t" style="left:1245px;top:203px;font-size:9px;line-height:10px;color:#c02040">S</div>
<div class="t" style="left:1256px;top:209px">printUsage() <span style="color:#95814a">: void</span></div>
<svg style="left:1233px;top:232px" width="9" height="9" viewBox="0 0 9 9"><circle cx="4.5" cy="4.5" r="4" fill="#3a9a3a" stroke="#2a7a2a" stroke-width="0.8"/><circle cx="4.5" cy="3.5" r="2" fill="#8ad08a" opacity="0.6"/></svg>
<div class="t" style="left:1245px;top:223px;font-size:9px;line-height:10px;color:#c02040">S</div>
<div class="t" style="left:1256px;top:229px">main(String[]) <span style="color:#95814a">: void</span></div>
<div class="a" style="left:365px;top:547px;width:1075px;height:288px;background:#fff;border-radius:7px 7px 0 0"></div>
<div class="a" style="left:365px;top:547px;width:1075px;height:26px;background:#f3f4fa;border-radius:7px 7px 0 0"></div>
<div class="a" style="left:624px;top:548px;width:95px;height:25px;background:linear-gradient(#d8e0ec,#eef2f9 60%,#f6f8fc);border-radius:7px 7px 0 0"></div>
<div class="t" style="left:551px;top:554px;color:#8c8c8c">Declaration</div>
<div class="t" style="left:647px;top:554px">Console</div>
<div class="t" style="left:473px;top:554px;color:#9a9a9a">Javadoc</div>
<svg style="left:532px;top:553px" width="16" height="16" viewBox="0 0 16 16"><path d="M0.5 0.5 H8 L11.5 4 V13.5 H0.5 Z" fill="#fbf6ea" stroke="#c8b48a"/><path d="M4.5 3 Q3 3 3 4.5 V6 L2 7 L3 8 V9.5 Q3 11 4.5 11" stroke="#5a8ad0" fill="none" stroke-width="0.9"/><path d="M5.5 5 H9 M5.5 7 H9 M5.5 9 H8" stroke="#5a8ad0" stroke-width="0.8"/><path d="M8 11 H12 V9 L15.5 12 L12 15 V13 H8 Z" fill="#f8d878" stroke="#c89a2a" stroke-width="0.8"/></svg>
<svg style="left:629px;top:553px" width="15" height="15" viewBox="0 0 15 15"><rect x="0.5" y="0.5" width="13" height="10" rx="1" fill="#fff" stroke="#2a5a9a" stroke-width="1.2"/><rect x="2" y="2" width="10" height="7" fill="#dce8f8"/><path d="M3.5 4 H9 M3.5 6.5 H7" stroke="#2a5a9a"/><path d="M4 13.5 H10" stroke="#2a5a9a" stroke-width="2"/></svg>
<svg style="left:700px;top:555px" width="11" height="11" viewBox="0 0 11 11"><path d="M1.5 1.5 L9.5 9.5 M9.5 1.5 L1.5 9.5" stroke="#7a7a7a" stroke-width="3.2"/><path d="M1.5 1.5 L9.5 9.5 M9.5 1.5 L1.5 9.5" stroke="#fff" stroke-width="1.5"/></svg>
<svg style="left:1289px;top:553px" width="18" height="16" viewBox="0 0 18 16"><rect x="0.5" y="5.5" width="13" height="10" fill="#f2f2f2" stroke="#b8b8b8"/><path d="M0.5 5.5 L7 10 L13.5 5.5" fill="none" stroke="#c8c8c8"/><path d="M9 8 L14 3 M12 1 L16 5" stroke="#8a8a8a" stroke-width="1.8"/></svg>
<svg style="left:1312px;top:552px" width="15" height="15" viewBox="0 0 15 15"><rect x="0.5" y="0.5" width="13" height="10" rx="1" fill="#e8e8e8" stroke="#8a8a8a" stroke-width="1.2"/><path d="M3.5 4 H9 M3.5 6.5 H7" stroke="#8a8a8a"/><path d="M4 13.5 H10" stroke="#8a8a8a" stroke-width="2"/></svg>
<svg style="left:1333px;top:558px" width="8" height="5" viewBox="0 0 8 5"><path d="M0 0 H7 L3.5 4 Z" fill="#6a6a6a"/></svg>
<svg style="left:1352px;top:552px" width="16" height="16" viewBox="0 0 16 16"><rect x="0.5" y="2.5" width="13" height="12" fill="#fdfcf4" stroke="#a8884a"/><rect x="1" y="3" width="12" height="2.5" fill="#3f8fd6"/><path d="M2 14 Q10 13 12 7" stroke="#f1d56a" stroke-width="1.5" fill="none"/><path d="M12 0 L13.6 3 L16 4 L13.6 5 L12 8 L10.4 5 L8 4 L10.4 3 Z" fill="#fbe38a" stroke="#c09a2a" stroke-width="0.7"/></svg>
<svg style="left:1373px;top:558px" width="8" height="5" viewBox="0 0 8 5"><path d="M0 0 H7 L3.5 4 Z" fill="#000"/></svg>
<svg style="left:1393px;top:555px" width="11" height="6" viewBox="0 0 11 6"><rect x="0.5" y="0.5" width="10" height="4" fill="#fff" stroke="#555"/></svg>
<svg style="left:1415px;top:555px" width="11" height="11" viewBox="0 0 11 11"><rect x="0.5" y="0.5" width="10" height="10" fill="#fff" stroke="#555"/><path d="M0.5 2.5 H10.5" stroke="#555"/></svg>
<div class="t" style="left:506px;top:576px">at this time.</div>
<div class="a" style="left:366px;top:592px;width:1070px;height:1px;background:#a0a0a0"></div>
<svg style="left:14px;top:110px" width="7" height="7" viewBox="0 0 7 7"><path d="M6 0.5 L6 6 L0.5 6 Z" fill="#3c3c3c"/></svg>
<svg style="left:27px;top:107px" width="16" height="16" viewBox="0 0 16 16"><text x="0" y="5.5" font-family="Liberation Sans" font-weight="bold" font-size="7" fill="#8b0a0a" textLength="16" lengthAdjust="spacingAndGlyphs">ODPS</text><path d="M1.5 5.5 H15 L12.5 13 H4 Z" fill="#a8d0f8" stroke="#3a5ab8" stroke-width="1"/><path d="M3 4.5 H13 V7 H3 Z" fill="#fbeaa8"/><path d="M0 15 Q0 13 3.5 7 Q7 13 7 15 Z" fill="#f2c050" stroke="#c8902a" stroke-width="0.7"/><rect x="3" y="9" width="1" height="4" fill="#3a2a1a"/></svg>
<div class="t" style="left:48px;top:106px">odps</div>
<svg style="left:47px;top:128px" width="15" height="13" viewBox="0 0 15 13"><path d="M0.5 3.5 Q0.5 2.5 1.5 2.5 H5 L6 4 H7 V12.5 H0.5 Z" fill="#f2d58a" stroke="#c09040"/><path d="M0.5 12.5 L3.5 6.5 H15 L12 12.5 Z" fill="#fbe7ae" stroke="#c09040"/><path d="M6 0.5 H13 V6 M6 3 H13 M9.5 -1 V6.5 M6 0.5 V6" fill="none" stroke="#7a4a3a" stroke-width="1.1"/></svg>
<div class="t" style="left:67px;top:126px">src</div>
<svg style="left:34px;top:149px" width="7" height="10" viewBox="0 0 7 10"><path d="M0.5 0.5 L5.5 4.5 L0.5 8.5 Z" fill="#fff" stroke="#9a9a9a" stroke-width="1"/></svg>
<svg style="left:47px;top:148px" width="15" height="12" viewBox="0 0 15 12"><rect x="0" y="2" width="8" height="3" fill="#2f7fbf"/><rect x="0" y="5" width="9" height="3" fill="#3e9a6a"/><rect x="0" y="8" width="10" height="4" fill="#c56a3a"/><path d="M9 0 L11 0 L15 12 L13 12 Z" fill="#e5b34a" stroke="#b88a2a" stroke-width="0.6"/></svg>
<div class="t" style="left:67px;top:146px">JRE System Library <span style="color:#95814a;letter-spacing:-0.6px">[Java]</span></div>
<svg style="left:34px;top:169px" width="7" height="10" viewBox="0 0 7 10"><path d="M0.5 0.5 L5.5 4.5 L0.5 8.5 Z" fill="#fff" stroke="#9a9a9a" stroke-width="1"/></svg>
<svg style="left:47px;top:168px" width="15" height="12" viewBox="0 0 15 12"><rect x="0" y="2" width="8" height="3" fill="#2f7fbf"/><rect x="0" y="5" width="9" height="3" fill="#3e9a6a"/><rect x="0" y="8" width="10" height="4" fill="#c56a3a"/><path d="M9 0 L11 0 L15 12 L13 12 Z" fill="#e5b34a" stroke="#b88a2a" stroke-width="0.6"/></svg>
<div class="t" style="left:67px;top:166px">Referenced Libraries</div>
<svg style="left:34px;top:190px" width="7" height="7" viewBox="0 0 7 7"><path d="M6 0.5 L6 6 L0.5 6 Z" fill="#3c3c3c"/></svg>
<svg style="left:47px;top:188px" width="15" height="13" viewBox="0 0 15 13"><path d="M0.5 3.5 Q0.5 2.5 1.5 2.5 H5 L6 4 H7 V12.5 H0.5 Z" fill="#f2d58a" stroke="#c09040"/><path d="M0.5 12.5 L3.5 6.5 H15 L12 12.5 Z" fill="#fbe7ae" stroke="#c09040"/><path d="M6 0.5 H13 V6 M6 3 H13 M9.5 -1 V6.5 M6 0.5 V6" fill="none" stroke="#7a4a3a" stroke-width="1.1"/><path d="M-1 16 Q-1 14.5 2.5 9 Q6 14.5 6 16 Z" fill="#f2c050" stroke="#c8902a" stroke-width="0.7"/><rect x="2" y="11" width="1" height="3" fill="#3a2a1a"/></svg>
<div class="t" style="left:67px;top:186px">examples</div>
<svg style="left:53px;top:210px" width="7" height="7" viewBox="0 0 7 7"><path d="M6 0.5 L6 6 L0.5 6 Z" fill="#3c3c3c"/></svg>
<svg style="left:67px;top:208px" width="13" height="13" viewBox="0 0 13 13"><rect x="0.5" y="0.5" width="12" height="12" fill="#e9d3a4" stroke="#a8664a"/><path d="M6.5 -1 V14 M-1 6.5 H14" stroke="#9a5236" stroke-width="1.3"/><rect x="1.5" y="1.5" width="4" height="4" fill="#f4e4c0"/><rect x="7.5" y="7.5" width="4" height="4" fill="#d9bb84"/></svg>
<div class="t" style="left:86px;top:206px">com.aliyun.odps.examples.graph</div>
<svg style="left:73px;top:229px" width="7" height="10" viewBox="0 0 7 10"><path d="M0.5 0.5 L5.5 4.5 L0.5 8.5 Z" fill="#fff" stroke="#9a9a9a" stroke-width="1"/></svg>
<svg style="left:86px;top:227px" width="12" height="14" viewBox="0 0 12 14"><path d="M0.5 0.5 H8 L11.5 4 V13.5 H0.5 Z" fill="#fbf6e6" stroke="#9a7a3a"/><path d="M8 0.5 V4 H11.5" fill="#e9d8a8" stroke="#9a7a3a"/><path d="M7 4 V9.5 Q7 11.5 5 11.5 Q3.5 11.5 3 10.5" fill="none" stroke="#2e5a9e" stroke-width="1.8"/></svg>
<div class="t" style="left:105px;top:226px">Kmeans.java</div>
<div class="a" style="left:82px;top:244px;width:120px;height:20px;border:1px solid #84acdd;border-radius:3px;background:linear-gradient(#eef4fd,#dbe7f8)"></div>
<svg style="left:73px;top:249px" width="7" height="10" viewBox="0 0 7 10"><path d="M0.5 0.5 L5.5 4.5 L0.5 8.5 Z" fill="#fff" stroke="#9a9a9a" stroke-width="1"/></svg>
<svg style="left:86px;top:247px" width="12" height="14" viewBox="0 0 12 14"><path d="M0.5 0.5 H8 L11.5 4 V13.5 H0.5 Z" fill="#fbf6e6" stroke="#9a7a3a"/><path d="M8 0.5 V4 H11.5" fill="#e9d8a8" stroke="#9a7a3a"/><path d="M7 4 V9.5 Q7 11.5 5 11.5 Q3.5 11.5 3 10.5" fill="none" stroke="#2e5a9e" stroke-width="1.8"/></svg>
<div class="t" style="left:105px;top:246px">PageRank.java</div>
<svg style="left:73px;top:269px" width="7" height="10" viewBox="0 0 7 10"><path d="M0.5 0.5 L5.5 4.5 L0.5 8.5 Z" fill="#fff" stroke="#9a9a9a" stroke-width="1"/></svg>
<svg style="left:86px;top:267px" width="12" height="14" viewBox="0 0 12 14"><path d="M0.5 0.5 H8 L11.5 4 V13.5 H0.5 Z" fill="#fbf6e6" stroke="#9a7a3a"/><path d="M8 0.5 V4 H11.5" fill="#e9d8a8" stroke="#9a7a3a"/><path d="M7 4 V9.5 Q7 11.5 5 11.5 Q3.5 11.5 3 10.5" fill="none" stroke="#2e5a9e" stroke-width="1.8"/></svg>
<div class="t" style="left:105px;top:266px">SSSP.java</div>
<svg style="left:53px;top:289px" width="7" height="10" viewBox="0 0 7 10"><path d="M0.5 0.5 L5.5 4.5 L0.5 8.5 Z" fill="#fff" stroke="#9a9a9a" stroke-width="1"/></svg>
<svg style="left:67px;top:288px" width="13" height="13" viewBox="0 0 13 13"><rect x="0.5" y="0.5" width="12" height="12" fill="#e9d3a4" stroke="#a8664a"/><path d="M6.5 -1 V14 M-1 6.5 H14" stroke="#9a5236" stroke-width="1.3"/><rect x="1.5" y="1.5" width="4" height="4" fill="#f4e4c0"/><rect x="7.5" y="7.5" width="4" height="4" fill="#d9bb84"/><path d="M-4 13.5 Q-4 12 0 5 Q4 12 4 13.5 Z" fill="#f2c050" stroke="#c8902a" stroke-width="0.7"/><rect x="-0.5" y="7.5" width="1" height="3.5" fill="#3a2a1a"/></svg>
<div class="t" style="left:86px;top:286px">com.aliyun.odps.examples.mr</div>
<svg style="left:53px;top:309px" width="7" height="10" viewBox="0 0 7 10"><path d="M0.5 0.5 L5.5 4.5 L0.5 8.5 Z" fill="#fff" stroke="#9a9a9a" stroke-width="1"/></svg>
<svg style="left:67px;top:308px" width="13" height="13" viewBox="0 0 13 13"><rect x="0.5" y="0.5" width="12" height="12" fill="#e9d3a4" stroke="#a8664a"/><path d="M6.5 -1 V14 M-1 6.5 H14" stroke="#9a5236" stroke-width="1.3"/><rect x="1.5" y="1.5" width="4" height="4" fill="#f4e4c0"/><rect x="7.5" y="7.5" width="4" height="4" fill="#d9bb84"/><path d="M-4 13.5 Q-4 12 0 5 Q4 12 4 13.5 Z" fill="#f2c050" stroke="#c8902a" stroke-width="0.7"/><rect x="-0.5" y="7.5" width="1" height="3.5" fill="#3a2a1a"/></svg>
<div class="t" style="left:86px;top:306px">com.aliyun.odps.examples.udf</div>
<svg style="left:53px;top:329px" width="7" height="10" viewBox="0 0 7 10"><path d="M0.5 0.5 L5.5 4.5 L0.5 8.5 Z" fill="#fff" stroke="#9a9a9a" stroke-width="1"/></svg>
<svg style="left:67px;top:328px" width="13" height="13" viewBox="0 0 13 13"><rect x="0.5" y="0.5" width="12" height="12" fill="#e9d3a4" stroke="#a8664a"/><path d="M6.5 -1 V14 M-1 6.5 H14" stroke="#9a5236" stroke-width="1.3"/><rect x="1.5" y="1.5" width="4" height="4" fill="#f4e4c0"/><rect x="7.5" y="7.5" width="4" height="4" fill="#d9bb84"/></svg>
<div class="t" style="left:86px;top:326px">com.aliyun.odps.examples.x</div>
<svg style="left:47px;top:349px" width="15" height="12" viewBox="0 0 15 12"><path d="M0.5 2.5 H5 L6.5 1 H12.5 V11.5 H0.5 Z" fill="#f2d58a" stroke="#b88a3a"/><path d="M0.5 11.5 L3 5.5 H15 L12.5 11.5 Z" fill="#fbe7ae" stroke="#b88a3a"/></svg>
<div class="t" style="left:67px;top:346px">temp</div>
<svg style="left:34px;top:370px" width="7" height="7" viewBox="0 0 7 7"><path d="M6 0.5 L6 6 L0.5 6 Z" fill="#3c3c3c"/></svg>
<svg style="left:47px;top:369px" width="15" height="12" viewBox="0 0 15 12"><path d="M0.5 2.5 H5 L6.5 1 H12.5 V11.5 H0.5 Z" fill="#f2d58a" stroke="#b88a3a"/><path d="M0.5 11.5 L3 5.5 H15 L12.5 11.5 Z" fill="#fbe7ae" stroke="#b88a3a"/></svg>
<div class="t" style="left:67px;top:366px">warehouse</div>
<svg style="left:53px;top:389px" width="7" height="10" viewBox="0 0 7 10"><path d="M0.5 0.5 L5.5 4.5 L0.5 8.5 Z" fill="#fff" stroke="#9a9a9a" stroke-width="1"/></svg>
<svg style="left:66px;top:389px" width="15" height="12" viewBox="0 0 15 12"><path d="M0.5 2.5 H5 L6.5 1 H12.5 V11.5 H0.5 Z" fill="#f2d58a" stroke="#b88a3a"/><path d="M0.5 11.5 L3 5.5 H15 L12.5 11.5 Z" fill="#fbe7ae" stroke="#b88a3a"/></svg>
<div class="t" style="left:86px;top:386px">example_project</div>
<svg style="left:68px;top:407px" width="11" height="14" viewBox="0 0 11 14"><path d="M0.5 0.5 H8 L10.5 3 V13.5 H0.5 Z" fill="#fff" stroke="#7f8fa8"/><path d="M2.5 4.5 H8.5 M2.5 6.5 H8.5 M2.5 8.5 H8.5 M2.5 10.5 H8.5" stroke="#5d82b8"/></svg>
<div class="t" style="left:86px;top:406px">Readme</div>
<div class="t" style="left:4px;top:839px">com.aliyun.odps.examp</div>
<div class="a" style="left:1075px;top:835px;width:221px;height:25px;background:linear-gradient(#3a3a3a,#0c0c0c 40%,#000);border-top:1px solid #7a7a7a"></div>
<svg style="left:1080px;top:839px" width="8" height="17" viewBox="0 0 8 17"><rect x="0" y="0" width="1.5" height="1.5" fill="#7a7a7a"/><rect x="0" y="3" width="1.5" height="1.5" fill="#7a7a7a"/><rect x="0" y="6" width="1.5" height="1.5" fill="#7a7a7a"/><rect x="0" y="9" width="1.5" height="1.5" fill="#7a7a7a"/><rect x="0" y="12" width="1.5" height="1.5" fill="#7a7a7a"/><rect x="0" y="15" width="1.5" height="1.5" fill="#7a7a7a"/><rect x="3" y="0" width="1.5" height="1.5" fill="#7a7a7a"/><rect x="3" y="3" width="1.5" height="1.5" fill="#7a7a7a"/><rect x="3" y="6" width="1.5" height="1.5" fill="#7a7a7a"/><rect x="3" y="9" width="1.5" height="1.5" fill="#7a7a7a"/><rect x="3" y="12" width="1.5" height="1.5" fill="#7a7a7a"/><rect x="3" y="15" width="1.5" height="1.5" fill="#7a7a7a"/><rect x="6" y="0" width="1.5" height="1.5" fill="#7a7a7a"/><rect x="6" y="3" width="1.5" height="1.5" fill="#7a7a7a"/><rect x="6" y="6" width="1.5" height="1.5" fill="#7a7a7a"/><rect x="6" y="9" width="1.5" height="1.5" fill="#7a7a7a"/><rect x="6" y="12" width="1.5" height="1.5" fill="#7a7a7a"/><rect x="6" y="15" width="1.5" height="1.5" fill="#7a7a7a"/></svg>
<svg style="left:1093px;top:839px" width="17" height="17" viewBox="0 0 17 17"><rect x="0.5" y="0.5" width="16" height="16" rx="4" fill="#f06a1a" stroke="#c04a0a"/><text x="4" y="13.5" font-family="Liberation Sans" font-weight="bold" font-size="14" fill="#fff">S</text></svg>
<svg style="left:1116px;top:840px" width="14" height="15" viewBox="0 0 14 15"><rect x="1.5" y="3.5" width="11" height="6" fill="none" stroke="#fff" stroke-width="2"/><path d="M7 0 V15" stroke="#fff" stroke-width="2"/></svg>
<svg style="left:1136px;top:840px" width="15" height="15" viewBox="0 0 15 15"><path d="M9 1 A6.5 6.5 0 1 1 2 11 A5.5 5.5 0 0 0 9 1 Z" fill="#fff"/></svg>
<svg style="left:1155px;top:840px" width="14" height="15" viewBox="0 0 14 15"><circle cx="3" cy="3" r="2" fill="none" stroke="#fff" stroke-width="1"/><path d="M10 9 Q11 11 8 14" stroke="#fff" stroke-width="2" fill="none"/></svg>
<svg style="left:1174px;top:841px" width="17" height="13" viewBox="0 0 17 13"><rect x="0.5" y="0.5" width="15" height="11" fill="#fff"/><rect x="2" y="2" width="2" height="2" fill="#000"/><rect x="2" y="5" width="2" height="2" fill="#000"/><rect x="2" y="8" width="2" height="2" fill="#000"/><rect x="5" y="2" width="2" height="2" fill="#000"/><rect x="5" y="5" width="2" height="2" fill="#000"/><rect x="5" y="8" width="2" height="2" fill="#000"/><rect x="8" y="2" width="2" height="2" fill="#000"/><rect x="8" y="5" width="2" height="2" fill="#000"/><rect x="8" y="8" width="2" height="2" fill="#000"/><rect x="11" y="2" width="2" height="2" fill="#000"/><rect x="11" y="5" width="2" height="2" fill="#000"/><rect x="11" y="8" width="2" height="2" fill="#000"/><rect x="14" y="2" width="2" height="2" fill="#000"/><rect x="14" y="5" width="2" height="2" fill="#000"/><rect x="14" y="8" width="2" height="2" fill="#000"/></svg>
<svg style="left:1196px;top:839px" width="14" height="16" viewBox="0 0 14 16"><circle cx="7" cy="5" r="4" fill="#9a9a9a"/><path d="M0 16 Q0 9 7 9 Q14 9 14 16 Z" fill="#9a9a9a"/></svg>
<svg style="left:1214px;top:839px" width="16" height="16" viewBox="0 0 16 16"><path d="M2 14 L9 7" stroke="#fff" stroke-width="3"/><circle cx="11" cy="5" r="4.5" fill="#fff"/><path d="M11 5 L15 1" stroke="#000" stroke-width="2.5"/></svg>
<svg style="left:1234px;top:839px" width="16" height="16" viewBox="0 0 16 16"><path d="M6 2.5 H1.5 V14.5 H13.5 V10" fill="none" stroke="#fff" stroke-width="1.8"/><path d="M6 10 L14 2 M9 1.5 H14.5 V7" stroke="#fff" stroke-width="1.8" fill="none"/></svg>
<svg style="left:1256px;top:839px" width="17" height="17" viewBox="0 0 17 17"><circle cx="8.5" cy="8.5" r="8" fill="#2a3ab0" stroke="#9aa0d0"/><text x="4.5" y="13" font-family="Liberation Sans" font-weight="bold" font-size="12" fill="#fff">?</text></svg>
<svg style="left:1280px;top:841px" width="10" height="14" viewBox="0 0 10 14"><rect x="1" y="1" width="6" height="1.8" fill="#fff"/><path d="M0 9 H8 L4 13 Z" fill="#fff"/></svg>
<svg style="left:1421px;top:840px" width="16" height="16" viewBox="0 0 16 16"><rect x="0.5" y="0.5" width="15" height="15" rx="3" fill="#f08a20" stroke="#c06a10"/><circle cx="4.5" cy="11.5" r="1.6" fill="#fff"/><path d="M3.5 7 A5 5 0 1 1 9 12.5 M3.5 3.5 A8.5 8.5 0 0 1 12.5 12.5" stroke="#fff" stroke-width="1.6" fill="none"/></svg>
<div class="a" style="left:0;top:860px;width:1440px;height:2px;background:#3c3c3c"></div>
<div class="menu" style="left:141px;top:175px;width:375px;height:686px"></div>
<div class="a" style="left:171px;top:177px;width:2px;height:682px;border-left:1px solid #e2e3e3;border-right:1px solid #fff"></div>
<div class="t" style="left:176px;top:181px;color:#000">New</div>
<div class="arr" style="left:500px;top:184px"></div>
<div class="sep" style="left:173px;top:204px;width:340px"></div>
<div class="t" style="left:176px;top:211px;color:#000">Open</div>
<div class="t" style="right:945px;top:211px;color:#000">F3</div>
<div class="t" style="left:176px;top:233px;color:#000">Open With</div>
<div class="arr" style="left:500px;top:236px"></div>
<div class="t" style="left:176px;top:255px;color:#000">Open Type Hierarchy</div>
<div class="t" style="right:945px;top:255px;color:#000">F4</div>
<div class="t" style="left:176px;top:277px;color:#000">Show In</div>
<div class="t" style="right:945px;top:277px;color:#000">Alt+Shift+W</div>
<div class="arr" style="left:500px;top:280px"></div>
<div class="sep" style="left:173px;top:300px;width:340px"></div>
<div class="t" style="left:176px;top:307px;color:#000">Copy</div>
<div class="t" style="right:945px;top:307px;color:#000">Ctrl+C</div>
<div class="t" style="left:176px;top:329px;color:#000">Copy Qualified Name</div>
<div class="t" style="left:176px;top:351px;color:#000">Paste</div>
<div class="t" style="right:945px;top:351px;color:#000">Ctrl+V</div>
<div class="t" style="left:176px;top:373px;color:#000">Delete</div>
<div class="t" style="right:945px;top:373px;color:#000">Delete</div>
<div class="sep" style="left:173px;top:396px;width:340px"></div>
<div class="t" style="left:176px;top:403px;color:#6d6d6d">Remove from Context</div>
<div class="t" style="right:945px;top:403px;color:#6d6d6d">Ctrl+Alt+Shift+Down</div>
<div class="t" style="left:176px;top:425px;color:#000">Build Path</div>
<div class="arr" style="left:500px;top:428px"></div>
<div class="t" style="left:176px;top:447px;color:#000">Source</div>
<div class="t" style="right:945px;top:447px;color:#000">Alt+Shift+S</div>
<div class="arr" style="left:500px;top:450px"></div>
<div class="t" style="left:176px;top:469px;color:#000">Refactor</div>
<div class="t" style="right:945px;top:469px;color:#000">Alt+Shift+T</div>
<div class="arr" style="left:500px;top:472px"></div>
<div class="sep" style="left:173px;top:492px;width:340px"></div>
<div class="t" style="left:176px;top:499px;color:#000">Import...</div>
<div class="t" style="left:176px;top:521px;color:#000">Export...</div>
<div class="sep" style="left:173px;top:544px;width:340px"></div>
<div class="t" style="left:176px;top:551px;color:#000">References</div>
<div class="arr" style="left:500px;top:554px"></div>
<div class="t" style="left:176px;top:573px;color:#000">Declarations</div>
<div class="arr" style="left:500px;top:576px"></div>
<div class="sep" style="left:173px;top:596px;width:340px"></div>
<div class="t" style="left:176px;top:603px;color:#000">Refresh</div>
<div class="t" style="right:945px;top:603px;color:#000">F5</div>
<div class="t" style="left:176px;top:625px;color:#000">Assign Working Sets...</div>
<div class="sep" style="left:173px;top:648px;width:340px"></div>
<div class="t" style="left:176px;top:655px;color:#000">Coverage As</div>
<div class="arr" style="left:500px;top:658px"></div>
<div class="t" style="left:176px;top:677px;color:#000">Run As</div>
<div class="arr" style="left:500px;top:680px"></div>
<div class="a" style="left:145px;top:695px;width:367px;height:22px;border:1px solid #aecff7;border-radius:3px;background:linear-gradient(#f2f7fe,#e4eefb)"></div>
<div class="t" style="left:176px;top:699px;color:#000">Debug As</div>
<div class="arr" style="left:500px;top:702px"></div>
<div class="t" style="left:176px;top:721px;color:#000">Validate</div>
<div class="t" style="left:176px;top:743px;color:#000">Restore from Local History...</div>
<div class="t" style="left:176px;top:765px;color:#000">Team</div>
<div class="arr" style="left:500px;top:768px"></div>
<div class="t" style="left:176px;top:787px;color:#000">Compare With</div>
<div class="arr" style="left:500px;top:790px"></div>
<div class="t" style="left:176px;top:809px;color:#000">Replace With</div>
<div class="arr" style="left:500px;top:812px"></div>
<div class="sep" style="left:173px;top:832px;width:340px"></div>
<div class="t" style="left:176px;top:839px;color:#000">Properties</div>
<div class="t" style="right:945px;top:839px;color:#000">Alt+Enter</div>
<div class="a" style="left:160px;top:695px;width:118px;height:23px;border:2px solid #e8563c"></div>
<div class="menu" style="left:510px;top:693px;width:323px;height:105px"></div>
<div class="a" style="left:539px;top:695px;width:2px;height:101px;border-left:1px solid #e2e3e3;border-right:1px solid #fff"></div>
<div class="a" style="left:511px;top:718px;width:319px;height:24px;border:1px solid #aecff7;border-radius:3px;background:linear-gradient(#f2f7fe,#e4eefb)"></div>
<div class="t" style="left:545px;top:699px">1 Java Application</div>
<div class="t" style="left:733px;top:699px">Alt+Shift+D, J</div>
<div class="t" style="left:545px;top:723px">2 ODPS Mapreduce|Graph</div>
<div class="t" style="left:545px;top:746px">3 ODPS UDF|UDTF|UDAF</div>
<div class="sep" style="left:542px;top:768px;width:288px"></div>
<div class="t" style="left:545px;top:776px">Debug Configurations...</div>
<div class="a" style="left:511px;top:718px;width:203px;height:26px;border:3px solid #e8563c"></div>
<svg style="left:148px;top:308px" width="15" height="16" viewBox="0 0 15 16"><rect x="0.5" y="0.5" width="9" height="12" fill="#eef2f8" stroke="#7a8aa8"/><rect x="3.5" y="2.5" width="10" height="13" fill="#fff" stroke="#5a7aa8"/><path d="M5.5 5.5 H11.5 M5.5 8 H11.5 M5.5 10.5 H11.5 M5.5 13 H11.5" stroke="#5a82c0"/></svg>
<svg style="left:148px;top:330px" width="16" height="16" viewBox="0 0 16 16"><rect x="0.5" y="0.5" width="9" height="9" fill="#eef2f8" stroke="#7a8aa8"/><path d="M2 3 H8 M2 5.5 H8" stroke="#5a82c0"/><rect x="5.5" y="5.5" width="10" height="9" fill="#fff" stroke="#5a7aa8"/><path d="M7.5 8 H13.5 M7.5 10.5 H13.5 M7.5 12.5 H13.5" stroke="#5a82c0"/></svg>
<svg style="left:149px;top:350px" width="15" height="17" viewBox="0 0 15 17"><rect x="0.5" y="3.5" width="11" height="13" rx="1" fill="#e8c888" stroke="#a8804a"/><rect x="3.5" y="1.5" width="5" height="3" fill="#d0d0d0" stroke="#7a7a7a"/><rect x="5.5" y="6.5" width="8" height="10" fill="#fff" stroke="#6a8ab0"/><path d="M7 9 H12 M7 11.5 H12 M7 14 H12" stroke="#6a8ab0"/></svg>
<svg style="left:148px;top:373px" width="15" height="15" viewBox="0 0 15 15"><path d="M2 2 L13 13 M13 2 L2 13" stroke="#e02020" stroke-width="3.6" stroke-linecap="round"/></svg>
<svg style="left:147px;top:402px" width="17" height="16" viewBox="0 0 17 16"><path d="M1 14.5 H16" stroke="#c0c0c0" stroke-dasharray="2 1"/><path d="M6 4 Q6 1 9 1 L11 3 L9 5 V12 H7 Z" fill="#e8e8e8" stroke="#b0b0b0"/></svg>
<svg style="left:147px;top:499px" width="16" height="15" viewBox="0 0 16 15"><path d="M0.5 6 V14.5 H15.5 V6" fill="none" stroke="#7a9ac8" stroke-width="1.2"/><rect x="2.5" y="9.5" width="11" height="3" fill="#c8d8f0" stroke="#7a9ac8"/><path d="M2 1 L9 7 M6 7.5 H9.5 V4" stroke="#3a7ac8" stroke-width="1.2" fill="none"/></svg>
<svg style="left:147px;top:521px" width="16" height="15" viewBox="0 0 16 15"><path d="M0.5 6 V14.5 H15.5 V6" fill="none" stroke="#7a9ac8" stroke-width="1.2"/><rect x="2.5" y="9.5" width="11" height="3" fill="#c8d8f0" stroke="#7a9ac8"/><path d="M5 8 L12 1 M8.5 1 H12.5 V5" stroke="#3a7ac8" stroke-width="1.2" fill="none"/></svg>
<svg style="left:147px;top:602px" width="16" height="16" viewBox="0 0 16 16"><path d="M3 8 Q3 2 9 2 M9 0 L12 2.5 L9 5 Z" stroke="#d89a20" stroke-width="2" fill="#f2c040"/><path d="M13 8 Q13 14 7 14 M7 16 L4 13.5 L7 11 Z" stroke="#d89a20" stroke-width="2" fill="#f2c040"/></svg>
<svg style="left:517px;top:700px" width="15" height="14" viewBox="0 0 15 14"><rect x="0.5" y="0.5" width="13" height="12" fill="#fdfbf2" stroke="#8a8a6a"/><rect x="1" y="1" width="12" height="2" fill="#3f8fd6"/><path d="M8.5 5 V9 Q8.5 10.5 6.8 10.5 Q5.8 10.5 5.3 9.8" stroke="#2e5a9e" stroke-width="1.2" fill="none"/></svg>
<svg style="left:516px;top:722px" width="15" height="15" viewBox="0 0 15 15"><g transform="scale(0.9375)" fill="#c0101a"><ellipse cx="4.3" cy="6.2" rx="2.4" ry="3.4" transform="rotate(-30 4.3 6.2)"/><ellipse cx="9" cy="4.2" rx="2.3" ry="3.6"/><ellipse cx="13" cy="9.6" rx="2" ry="2.7"/><ellipse cx="4" cy="12.2" rx="2" ry="2.6" transform="rotate(-20 4 12.2)"/><path d="M5.8 16 L7.6 11.6 L10.4 10.6 L13.8 13.6 L12.8 15 L8.8 15 L8 16 Z"/><circle cx="2.8" cy="2.2" r="0.9"/><circle cx="8.8" cy="0.3" r="0.9"/></g></svg>
<svg style="left:518px;top:747px" width="15" height="15" viewBox="0 0 15 15"><rect x="0" y="0" width="15" height="15" fill="#f8c820"/><text x="0.6" y="10" font-family="Liberation Sans" font-weight="bold" font-size="6.3" fill="#2a6a1a" textLength="13.5" lengthAdjust="spacingAndGlyphs">UDF</text></svg>
</body></html>
